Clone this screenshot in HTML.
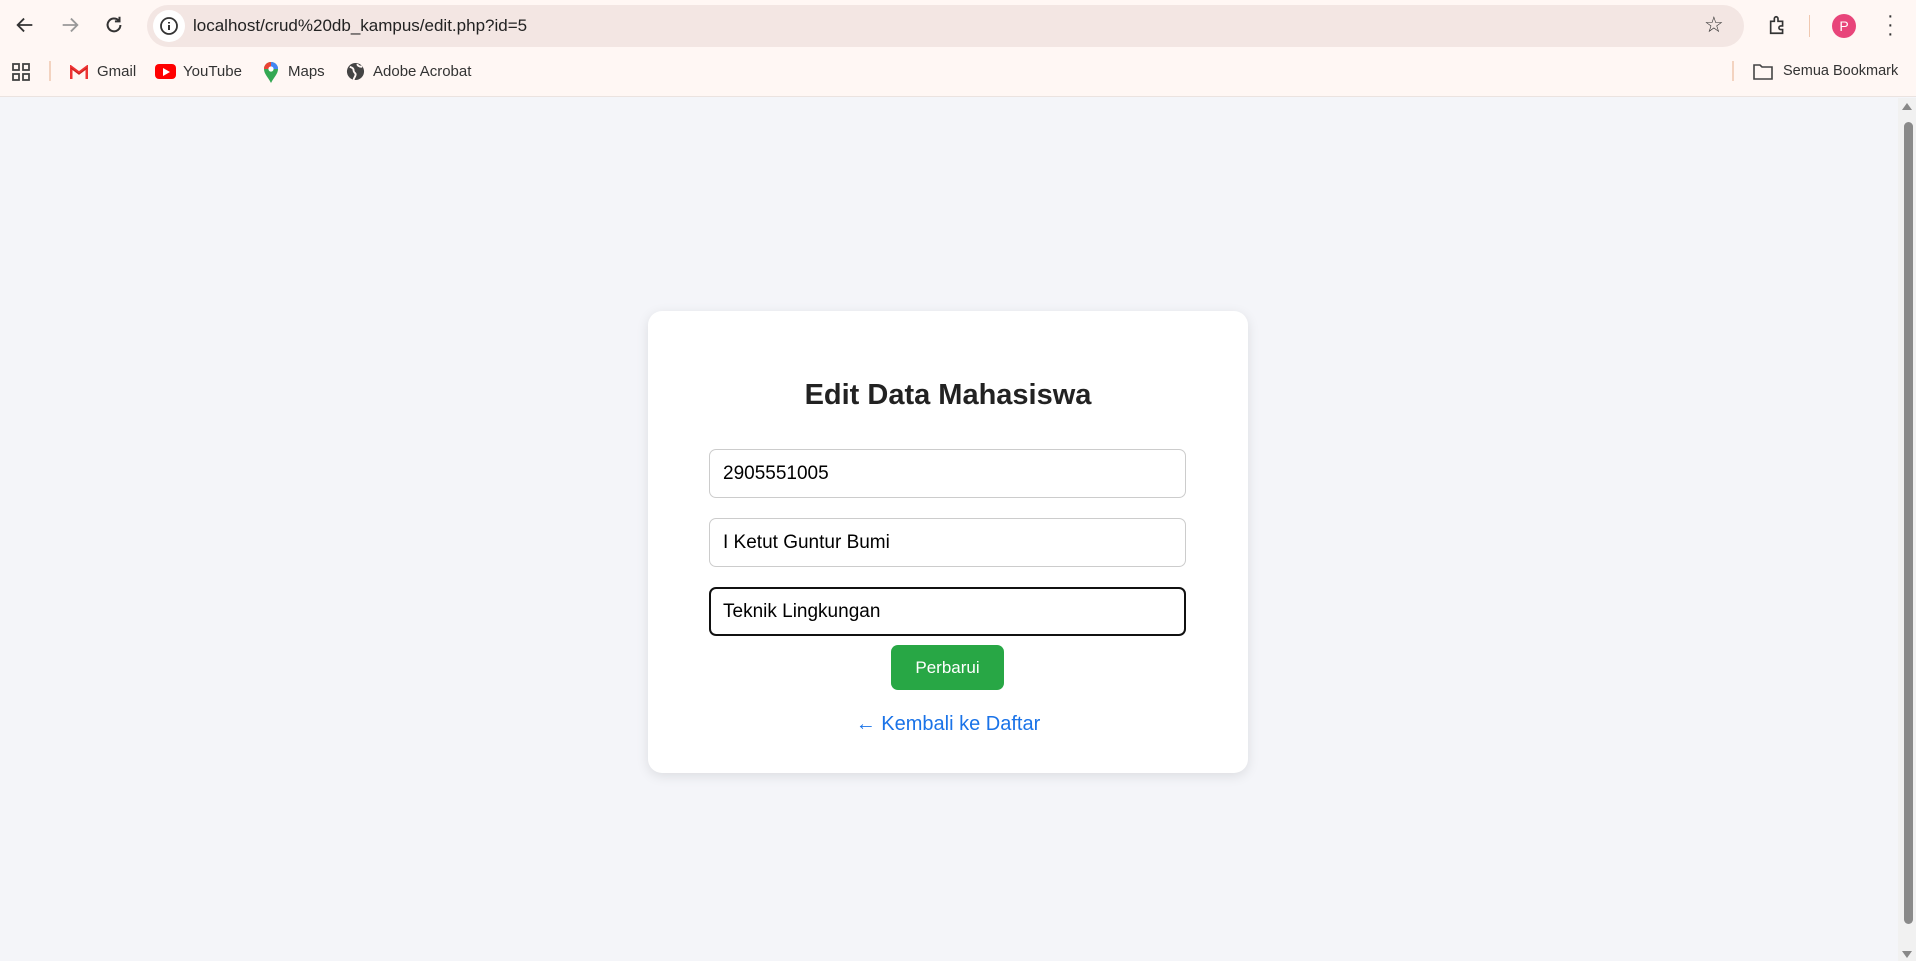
<!DOCTYPE html>
<html><head><meta charset="utf-8"><style>
*{box-sizing:border-box;margin:0;padding:0}
body{width:1916px;height:961px;overflow:hidden;background:#f4f5f9;font-family:"Liberation Sans",sans-serif;position:relative}
.top{position:absolute;left:0;top:0;width:1916px;height:97px;background:#fff7f4;border-bottom:1px solid #ebe3e0}
.addr{position:absolute;left:147px;top:5px;width:1597px;height:42px;border-radius:21px;background:#f3e6e3}
.abs{position:absolute}
.url{left:193px;top:16px;font-size:17px;color:#222}
.bm{top:63px;font-size:15px;color:#333}
.card{position:absolute;left:648px;top:311px;width:600px;height:462px;background:#fff;border-radius:14px;box-shadow:0 3px 12px rgba(0,0,0,.1)}
h2{position:absolute;left:648px;width:600px;top:379px;text-align:center;font-size:29px;font-weight:bold;color:#222}
.in{position:absolute;left:709px;width:477px;height:49px;border:1px solid #ccc;border-radius:7px;font-size:19px;color:#000;padding:13px 0 0 13px}
.btn{position:absolute;left:891px;top:645px;width:113px;height:45px;background:#28a745;border-radius:7px;color:#fff;font-size:17px;text-align:center;line-height:45px}
.link{position:absolute;left:648px;width:600px;top:713px;text-align:center;color:#1a73e8;font-size:20px}
</style></head><body>
<div class="top">
<div class="addr"></div>
<svg class="abs" style="left:14px;top:14px" width="22" height="22" viewBox="0 0 24 24"><path d="M20 12H5M11 5l-7 7 7 7" stroke="#333" stroke-width="2" fill="none"/></svg>
<svg class="abs" style="left:59px;top:14px" width="22" height="22" viewBox="0 0 24 24"><path d="M4 12h15M13 5l7 7-7 7" stroke="#999" stroke-width="2" fill="none"/></svg>
<svg class="abs" style="left:103px;top:14px" width="22" height="22" viewBox="0 0 24 24"><path d="M19 12a7 7 0 1 1-2-5" stroke="#333" stroke-width="2.2" fill="none"/><path d="M18 3v5h-5" stroke="#333" stroke-width="2.2" fill="none"/></svg>
<div class="abs" style="left:153px;top:10px;width:32px;height:32px;border-radius:50%;background:#fff"></div>
<svg class="abs" style="left:159px;top:16px" width="20" height="20" viewBox="0 0 20 20"><circle cx="10" cy="10" r="8" stroke="#333" stroke-width="1.8" fill="none"/><path d="M10 9v5M10 6v1.5" stroke="#333" stroke-width="2"/></svg>
<div class="abs url">localhost/crud%20db_kampus/edit.php?id=5</div>
<div class="abs" style="left:1704px;top:12px;font-size:22px;color:#333">☆</div>
<svg class="abs" style="left:1767px;top:14px" width="22" height="22" viewBox="0 0 24 24"><path d="M4 8h4V5a2 2 0 0 1 4 0v3h5v5h-2a2 2 0 0 0 0 4h2v4H4z" stroke="#333" stroke-width="1.8" fill="none"/></svg>
<div class="abs" style="left:1809px;top:15px;width:1px;height:22px;background:#f0c8b0"></div>
<div class="abs" style="left:1832px;top:14px;width:24px;height:24px;border-radius:50%;background:#e8457a;color:#fff;font-size:14px;text-align:center;line-height:24px">P</div>
<div class="abs" style="left:1887px;top:12px;font-size:20px;color:#333;line-height:9px;width:6px;text-align:center">·<br>·<br>·</div>
<svg class="abs" style="left:12px;top:63px" width="18" height="18" viewBox="0 0 18 18"><g stroke="#444" stroke-width="1.8" fill="none"><rect x="1" y="1" width="6" height="6"/><rect x="11" y="1" width="6" height="6"/><rect x="1" y="11" width="6" height="6"/><rect x="11" y="11" width="6" height="6"/></g></svg>
<div class="abs" style="left:49px;top:61px;width:2px;height:20px;background:#f3d3c0"></div>
<svg class="abs" style="left:70px;top:65px" width="18" height="14" viewBox="0 0 18 14"><path d="M1 14V2l8 6 8-6v12" stroke="#e33" stroke-width="3" fill="none"/><path d="M1 3l8 6 8-6" stroke="#c5221f" stroke-width="1" fill="none"/></svg>
<div class="abs bm" style="left:97px">Gmail</div>
<div class="abs" style="left:155px;top:64px;width:21px;height:15px;border-radius:4px;background:#f00"></div>
<div class="abs" style="left:163px;top:68px;width:0;height:0;border-left:7px solid #fff;border-top:4px solid transparent;border-bottom:4px solid transparent"></div>
<div class="abs bm" style="left:183px">YouTube</div>
<svg class="abs" style="left:263px;top:61px" width="16" height="22" viewBox="0 0 16 22"><path d="M8 22C5 16 1 13 1 8a7 7 0 0 1 14 0c0 5-4 8-7 14z" fill="#34a853"/><path d="M1 8a7 7 0 0 1 7-7v7z" fill="#ea4335"/><path d="M8 1a7 7 0 0 1 7 7H8z" fill="#4285f4"/><circle cx="8" cy="8" r="2.6" fill="#fff"/></svg>
<div class="abs bm" style="left:288px">Maps</div>
<svg class="abs" style="left:346px;top:62px" width="19" height="19" viewBox="0 0 20 20"><circle cx="10" cy="10" r="9" fill="#444"/><path d="M4 5c2 1 4 1 4 4s3 2 2 5-2 3-2 5M12 2c0 2 2 3 5 3" stroke="#fff7f4" stroke-width="2" fill="none"/></svg>
<div class="abs bm" style="left:373px">Adobe Acrobat</div>
<div class="abs" style="left:1732px;top:61px;width:2px;height:20px;background:#f3d3c0"></div>
<svg class="abs" style="left:1753px;top:64px" width="20" height="16" viewBox="0 0 20 16"><path d="M1 1h6l2 2h10v12H1z" stroke="#444" stroke-width="1.6" fill="none"/></svg>
<div class="abs bm" style="left:1783px;font-size:14.5px">Semua Bookmark</div>
</div>
<div class="abs" style="left:1898px;top:98px;width:18px;height:863px;background:#f1f1f1"></div>
<div class="abs" style="left:1904px;top:122px;width:9px;height:802px;border-radius:5px;background:#8a8a8a"></div>
<div class="abs" style="left:1902px;top:103px;border-left:5px solid transparent;border-right:5px solid transparent;border-bottom:7px solid #888"></div>
<div class="abs" style="left:1902px;top:951px;border-left:5px solid transparent;border-right:5px solid transparent;border-top:7px solid #888"></div>
<div class="card"></div>
<h2>Edit Data Mahasiswa</h2>
<div class="in" style="top:449px">2905551005</div>
<div class="in" style="top:518px">I Ketut Guntur Bumi</div>
<div class="in" style="top:587px;height:49px;border:2px solid #111;padding:12px 0 0 12px">Teknik Lingkungan</div>
<div class="btn">Perbarui</div>
<div class="link">← Kembali ke Daftar</div>
</body></html>
